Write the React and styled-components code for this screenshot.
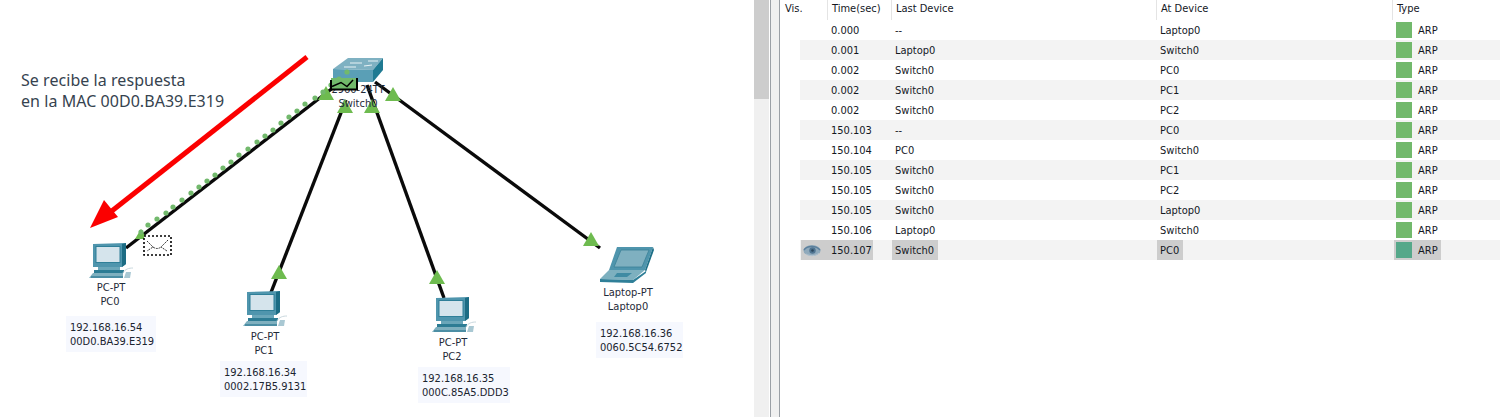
import React from "react";
import styled, { createGlobalStyle } from "styled-components";

const Global = createGlobalStyle`
  html, body { margin: 0; padding: 0; background: #fff; overflow: hidden; }
  #root { width: 1500px; height: 417px; }
`;

const Page = styled.div`
  display: flex;
  width: 1500px;
  height: 417px;
  font-family: "DejaVu Sans Condensed", "Liberation Sans", Arial, sans-serif;
  font-size: 11px;
  color: #1b2430;
  background: #fff;
  overflow: hidden;
`;

const Canvas = styled.div`
  position: relative;
  flex: 0 0 754px;
  height: 417px;
  background: #fff;
`;

const Drawing = styled.svg`
  position: absolute;
  left: 0;
  top: 0;
  width: 754px;
  height: 417px;
`;

const Overlay = styled(Drawing)``;

const Note = styled.div`
  position: absolute;
  left: 21px;
  top: 70px;
  font-family: "Noto Sans", sans-serif;
  font-size: 16px;
  line-height: 21px;
  letter-spacing: 0.05px;
  color: #36434f;
  white-space: nowrap;
`;

const DeviceName = styled.div`
  position: absolute;
  left: ${(p) => p.$x - 60}px;
  top: ${(p) => p.$y}px;
  width: 120px;
  text-align: center;
  line-height: 14px;
  color: #1f2a38;
`;

const AddressCard = styled.div`
  position: absolute;
  left: ${(p) => p.$x}px;
  top: ${(p) => p.$y}px;
  width: ${(p) => p.$w}px;
  height: 36px;
  padding: 5px 0 0 4px;
  box-sizing: border-box;
  background: #f6f8fe;
  line-height: 14px;
  color: #1b2430;
`;

const Scrollbar = styled.div`
  flex: 0 0 15px;
  height: 417px;
  background: #f0f0f0;
`;

const Thumb = styled.div`
  height: 99px;
  background: #cdcdcd;
`;

const Splitter = styled.div`
  flex: 0 0 10px;
  box-sizing: border-box;
  height: 417px;
  margin-left: 1px;
  background: #f0f0f0;
  border-left: 1px solid #9ba0a6;
  border-right: 1px solid #9ba0a6;
`;

const EventList = styled.div`
  flex: 1;
  min-width: 0;
  background: #fff;
`;

const HeaderRow = styled.div`
  display: grid;
  grid-template-columns: 47px 64px 265px 236px 1fr;
  height: 20px;
`;

const HeaderCell = styled.div`
  padding-left: ${(p) => (p.$first ? 5 : 4)}px;
  line-height: 17px;
  height: 20px;
  box-sizing: border-box;
  border-left: ${(p) => (p.$first ? "0" : "1px solid #e4e4e4")};
  color: #14181f;
`;

const Row = styled.div`
  display: grid;
  grid-template-columns: 91px 265px 237px 1fr;
  height: 20px;
  margin-left: 20px;
  background: ${(p) => (p.$shaded ? "#f3f3f3" : "#fff")};
`;

const Cell = styled.div`
  display: flex;
  align-items: stretch;
  height: 20px;
  color: #14181f;
`;

const Mark = styled.span`
  display: inline-flex;
  align-items: center;
  height: 20px;
  margin-left: 1px;
  padding: 0 4px 0 3px;
  background: ${(p) => (p.$on ? "#cdcdcd" : "transparent")};
`;

const Label = styled.span`
  padding-top: 2px;
  line-height: 16px;
`;

const TimeMark = styled(Mark)`
  width: 72px;
  box-sizing: border-box;
  padding: 0;
`;

const EyeSlot = styled.span`
  flex: 0 0 30px;
  display: flex;
  align-items: center;
  padding-left: 2px;
  box-sizing: border-box;
`;

const TypeMark = styled(Mark)`
  margin-left: 1px;
  padding: 0 3px 0 2px;
  gap: 6px;
`;

const Swatch = styled.span`
  width: 16px;
  height: 16px;
  background: ${(p) => (p.$on ? "#55a88a" : "#72b96c")};
`;

const events = [
  ["0.000", "--", "Laptop0"],
  ["0.001", "Laptop0", "Switch0"],
  ["0.002", "Switch0", "PC0"],
  ["0.002", "Switch0", "PC1"],
  ["0.002", "Switch0", "PC2"],
  ["150.103", "--", "PC0"],
  ["150.104", "PC0", "Switch0"],
  ["150.105", "Switch0", "PC1"],
  ["150.105", "Switch0", "PC2"],
  ["150.105", "Switch0", "Laptop0"],
  ["150.106", "Laptop0", "Switch0"],
  ["150.107", "Switch0", "PC0"],
];

const dots = [
  [141, 232], [148, 225], [157, 219], [166, 213], [173, 207], [182, 200], [191, 193],
  [199, 187], [207, 181], [215, 175], [223, 168], [231, 162], [239, 155], [248, 149],
  [257, 142], [265, 136], [273, 130], [281, 123], [289, 117], [297, 111], [305, 104],
  [315, 98], [323, 92], [331, 85], [339, 79], [347, 72],
];

const triangles = [
  [326, 94, 7], [345, 107, 7], [372, 107, 7], [393, 95, 7],
  [141, 235, 5], [279, 273, 7], [437, 278, 7], [591, 240, 7],
];

const PcIcon = ({ x, y }) => (
  <g transform={`translate(${x} ${y})`}>
    <polygon points="4,1 37,0 37,21 33,24 4,24" fill="#4f95ad" />
    <polygon points="33,1 37,0 37,21 33,24" fill="#1c6c84" />
    <rect x="7" y="3.5" width="24" height="16" fill="#d5e4ec" stroke="#2f7f98" strokeWidth="1" />
    <rect x="9" y="24" width="22" height="3" fill="#6aa6b9" />
    <rect x="5" y="27" width="30" height="3" fill="#2d7c94" />
    <polygon points="4,30 34,30 34,35 0,35" fill="#7fb0bf" />
    <rect x="2" y="33" width="32" height="2" fill="#4c8ea4" />
    <path d="M34 30 C36 26 40 25 44 25" fill="none" stroke="#c9d8de" strokeWidth="1" />
    <polygon points="37,29 42,29 41,35 35,35" fill="#a9c8d3" />
  </g>
);

const LaptopIcon = () => (
  <g>
    <polygon points="617,247 653,247 645,270 609,270" fill="#4f95ad" />
    <polygon points="621,250 649,250 642,267 614,267" fill="#7fb0c0" stroke="#3b8198" strokeWidth="0.8" />
    <polygon points="653,247 654,250 646,272 645,270" fill="#1d6f87" />
    <polygon points="609,270 645,270 633,280 600,279" fill="#7db0bf" />
    <polygon points="617,273 632,273 627,277 614,277" fill="#3f8ba3" />
    <polygon points="600,279 633,280 646,271 646,273 633,283 600,282" fill="#2f7f98" />
  </g>
);

const SwitchIcon = () => (
  <g>
    <polygon points="333,69 348,58 383,58 373,70" fill="#7fb1c2" />
    <path d="M350 63 L362 63 M368 61 L378 61 M344 67 L356 67 M364 66 L372 65" stroke="#e8f2f5" strokeWidth="1" />
    <polygon points="333,69 373,70 373,82 333,82" fill="#5a9fb6" />
    <polygon points="373,70 383,58 383,70 373,82" fill="#1f7a92" />
  </g>
);

const EyeIcon = () => (
  <svg width="18" height="13" viewBox="0 0 18 13" aria-hidden="true">
    <ellipse cx="9" cy="6.5" rx="8.6" ry="5.4" fill="#8fa9bb" />
    <path d="M1 6 C4 1.5 13 1 17 6" fill="none" stroke="#5b7f9c" strokeWidth="1.4" />
    <circle cx="9.5" cy="6.5" r="3.2" fill="#4f7491" />
    <circle cx="9.5" cy="6.5" r="1.3" fill="#2b465c" />
    <path d="M3 10 C7 12.5 13 12 16 9" fill="none" stroke="#b4c4d0" strokeWidth="1" />
  </svg>
);

const triPoints = ([x, y, r]) => `${x},${y - r - 1} ${x - r - 1},${y + r - 1} ${x + r + 1},${y + r - 1}`;

export default function App() {
  return (
    <Page>
      <Global />
      <Canvas>
        <Drawing viewBox="0 0 754 417">
          <g stroke="#0a0a0a" strokeWidth="3.4" fill="none">
            <line x1="126" y1="248" x2="334" y2="87" />
            <line x1="270" y1="295" x2="346" y2="100" />
            <line x1="444" y1="298" x2="367" y2="85" />
            <line x1="600" y1="248" x2="375" y2="82" />
          </g>
          <line x1="307" y1="57" x2="108" y2="214" stroke="#fb0000" strokeWidth="5" />
          <polygon points="90,228 118,217 104,200" fill="#fb0000" />
          <PcIcon x={89} y={243} />
          <PcIcon x={243} y={291} />
          <PcIcon x={432} y={297} />
          <LaptopIcon />
          <SwitchIcon />
          {triangles.map((t) => (
            <polygon key={`${t[0]}-${t[1]}`} points={triPoints(t)} fill="#6ebb4f" />
          ))}
        </Drawing>
        <Note>
          Se recibe la respuesta
          <br />
          en la MAC 00D0.BA39.E319
        </Note>
        <DeviceName $x={358} $y={83}>2960-24TT</DeviceName>
        <DeviceName $x={358} $y={97}>Switch0</DeviceName>
        <DeviceName $x={111} $y={281}>PC-PT</DeviceName>
        <DeviceName $x={110} $y={295}>PC0</DeviceName>
        <DeviceName $x={265} $y={330}>PC-PT</DeviceName>
        <DeviceName $x={264} $y={344}>PC1</DeviceName>
        <DeviceName $x={453} $y={336}>PC-PT</DeviceName>
        <DeviceName $x={452} $y={350}>PC2</DeviceName>
        <DeviceName $x={628} $y={286}>Laptop-PT</DeviceName>
        <DeviceName $x={628} $y={300}>Laptop0</DeviceName>
        <AddressCard $x={66} $y={316} $w={90}>192.168.16.54<br />00D0.BA39.E319</AddressCard>
        <AddressCard $x={220} $y={361} $w={87}>192.168.16.34<br />0002.17B5.9131</AddressCard>
        <AddressCard $x={418} $y={367} $w={92}>192.168.16.35<br />000C.85A5.DDD3</AddressCard>
        <AddressCard $x={596} $y={322} $w={87}>192.168.16.36<br />0060.5C54.6752</AddressCard>
        <Overlay viewBox="0 0 754 417">
          {dots.map(([x, y]) => (
            <circle key={`${x}-${y}`} cx={x} cy={y} r="2.6" fill="#72b96c" />
          ))}
          <rect x="331" y="78" width="26" height="11" fill="#72b96c" />
          <path d="M331 80 V89.5 H357 V78" fill="none" stroke="#000" strokeWidth="2" />
          <path d="M332 86.5 L341 82.5 L347 86.5 L353 80" fill="none" stroke="#000" strokeWidth="1.5" />
          <rect x="144" y="236" width="27" height="19" fill="#fff" stroke="#000" strokeWidth="1.6" strokeDasharray="2 2" />
          <path d="M147 241 L153 247 L147 251 M168 240 L161 247 L167 251 M153 247 Q157 250 161 247" fill="none" stroke="#333" strokeWidth="1" strokeDasharray="2 1" />
        </Overlay>
      </Canvas>
      <Scrollbar>
        <Thumb />
      </Scrollbar>
      <Splitter />
      <EventList>
        <HeaderRow>
          <HeaderCell $first>Vis.</HeaderCell>
          <HeaderCell>Time(sec)</HeaderCell>
          <HeaderCell>Last Device</HeaderCell>
          <HeaderCell>At Device</HeaderCell>
          <HeaderCell>Type</HeaderCell>
        </HeaderRow>
        {events.map(([time, last, at], i) => {
          const on = i === events.length - 1;
          return (
            <Row key={`${time}-${i}`} $shaded={i % 2 === 1}>
              <Cell>
                <TimeMark $on={on}>
                  <EyeSlot>{on && <EyeIcon />}</EyeSlot>
                  <Label>{time}</Label>
                </TimeMark>
              </Cell>
              <Cell><Mark $on={on}><Label>{last}</Label></Mark></Cell>
              <Cell><Mark $on={on}><Label>{at}</Label></Mark></Cell>
              <Cell>
                <TypeMark $on={on}>
                  <Swatch $on={on} />
                  <Label>ARP</Label>
                </TypeMark>
              </Cell>
            </Row>
          );
        })}
      </EventList>
    </Page>
  );
}
